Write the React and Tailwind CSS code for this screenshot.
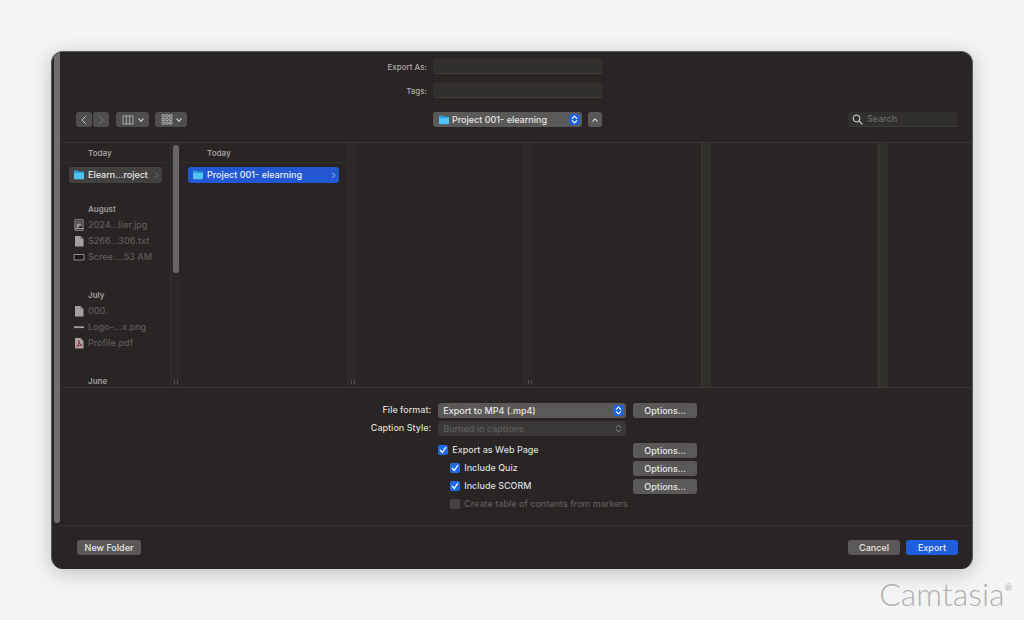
import React from "react";

const groups = [
  {
    title: "August",
    files: [
      { name: "2024…lier.jpg", icon: "image" },
      { name: "S266…306.txt", icon: "doc" },
      { name: "Scree….53 AM", icon: "screen" },
    ],
  },
  {
    title: "July",
    files: [
      { name: "000.", icon: "doc" },
      { name: "Logo-…x.png", icon: "line" },
      { name: "Profile.pdf", icon: "pdf" },
    ],
  },
];

function FolderIcon({ className = "" }) {
  return (
    <svg viewBox="0 0 12 10" aria-hidden="true" className={`h-[10px] w-3 shrink-0 ${className}`}>
      <path d="M1 1.6C1 .9 1.4.5 2.1.5h2c.4 0 .7.1 1 .4l.6.6h4.2c.7 0 1.1.4 1.1 1.1V4H1z" fill="#2b9fd6" />
      <path d="M1 2.9h10v5.3c0 .7-.4 1.1-1.1 1.1H2.1C1.4 9.300 1 8.900 1 8.200z" fill="#4fc3f7" />
    </svg>
  );
}

function FileIcon({ type }) {
  return (
    <svg viewBox="0 0 12 12" aria-hidden="true" className="h-3 w-3 shrink-0">
      {type === "image" && (
        <>
          <path d="M2 .8h8v10.400H2z" fill="none" stroke="#989694" />
          <path d="M3.500 2.600h5v1h-5zM3.500 4.600h5v3l-1.500-1-1.500 2-2 .8z" fill="#989694" />
          <path d="M2 9.500h8" stroke="#989694" />
        </>
      )}
      {type === "doc" && (
        <>
          <path d="M2 1h5.500L10.500 4v7.500H2z" fill="#a3a19f" />
          <path d="M7.500 1v3h3z" fill="#7b7977" />
        </>
      )}
      {type === "screen" && <path d="M1 3.500h10v5.500H1z" fill="#1d1b1a" stroke="#8f8d8b" />}
      {type === "line" && <path d="M1 6.200h10" stroke="#a5a3a1" strokeWidth="1.800" />}
      {type === "pdf" && (
        <>
          <path d="M2 1h5.500L10.500 4v7.500H2z" fill="#b09fa1" />
          <path
            d="M3.600 9.500C5 8.500 6 6.500 6 3.600c.2 2.900 1.300 4.400 3 4.700-2 0-3.800.3-5.400 1.200z"
            fill="none"
            stroke="#8f3040"
            strokeWidth="1"
          />
        </>
      )}
    </svg>
  );
}

function Chevron({ d, className = "" }) {
  return (
    <svg
      viewBox="0 0 10 10"
      aria-hidden="true"
      fill="none"
      stroke="currentColor"
      strokeLinecap="round"
      strokeLinejoin="round"
      className={`shrink-0 ${className}`}
    >
      <path d={d} />
    </svg>
  );
}

const RIGHT = "M3.500 1.500 7 5 3.500 8.500";
const LEFT = "M6.500 1.500 3 5l3.500 3.500";
const DOWN = "M2.200 3.700 5 6.500l2.800-2.800";
const UP = "M2.200 6.500 5 3.700l2.800 2.800";
const UP_DOWN = "M2.500 3.700 5 1.300l2.500 2.400M2.500 6.300 5 8.700l2.500-2.400";

function PopupSelect({ id, label, value, disabled, folder }) {
  return (
    <div className="relative min-w-0 flex-1">
      <select
        id={id}
        aria-label={label}
        disabled={disabled}
        defaultValue={value}
        className={`block h-[15px] w-full appearance-none rounded-[3px] pr-5 text-[9px] leading-[15px] font-medium ${
          folder ? "pl-[19px]" : "pl-[5px]"
        } ${disabled ? "bg-[#3b3938] text-[#5f5d5c] opacity-100" : "bg-[#5b5958] text-[#e6e5e4]"}`}
      >
        <option>{value}</option>
      </select>
      {folder && <FolderIcon className="pointer-events-none absolute top-[3px] left-[5px]" />}
      <span
        className={`pointer-events-none absolute top-[2px] right-[2px] flex h-[11px] w-[11px] items-center justify-center rounded-[3px] ${
          disabled ? "text-[#72706f]" : "bg-[#1f65d8] text-white"
        }`}
      >
        <Chevron d={UP_DOWN} className="h-[9px] w-[9px] stroke-[1.2]" />
      </span>
    </div>
  );
}

function Button({ primary, className = "", children }) {
  return (
    <button
      type="button"
      className={`h-[15px] rounded-[3px] text-[9px] leading-[15px] font-medium ${
        primary ? "bg-[#1f5fdd] text-[#e4ebfa]" : "bg-[#5b5958] text-[#e6e5e4]"
      } ${className}`}
    >
      {children}
    </button>
  );
}

function CheckRow({ id, label, checked, disabled, nested, wide }) {
  return (
    <div
      className={`flex h-[18px] items-center gap-1 whitespace-nowrap ${nested ? "pl-3" : ""} ${
        wide ? "col-span-3" : "col-span-1"
      } col-start-2`}
    >
      <span className="relative flex">
        <input
          id={id}
          type="checkbox"
          defaultChecked={checked}
          disabled={disabled}
          className="peer h-[10px] w-[10px] appearance-none rounded-[2px] bg-[#454342] checked:bg-[#1f6be6]"
        />
        <svg
          viewBox="0 0 10 10"
          aria-hidden="true"
          className="pointer-events-none absolute inset-0 hidden h-[10px] w-[10px] peer-checked:block"
        >
          <path d="M2.400 5.300 4.300 7.500 7.700 2.500" fill="none" stroke="#fff" strokeWidth="1.300" strokeLinecap="round" />
        </svg>
      </span>
      <label htmlFor={id} className={disabled ? "text-[#5f5d5c]" : "text-[#dddcdb]"}>
        {label}
      </label>
    </div>
  );
}

function TopFields() {
  return (
    <div className="grid grid-cols-[1fr_169px_1fr] gap-x-[6px] gap-y-2 pt-[7px] text-[8px] font-medium">
      <label htmlFor="export-as" className="text-right leading-4 text-[#aba9a8]">
        Export As:
      </label>
      <input id="export-as" className="h-[15px] rounded-[2px] border-b border-[#3f3e3a] bg-[#32302d] px-1 text-white" />
      <label htmlFor="tags" className="col-start-1 text-right leading-4 text-[#aba9a8]">
        Tags:
      </label>
      <input id="tags" className="h-[15px] rounded-[2px] border-b border-[#3f3e3a] bg-[#32302d] px-1 text-white" />
    </div>
  );
}

function Toolbar() {
  return (
    <div className="grid grid-cols-[1fr_169px_1fr] items-center gap-x-[6px] pt-[13px] pb-[15px]">
      <div className="flex pl-[13px] text-[#c4c2c1]">
        <div className="flex gap-px">
          <button type="button" aria-label="Back" className="flex h-[15px] w-4 items-center justify-center rounded-[3px] bg-[#504e4d]">
            <Chevron d={LEFT} className="h-[10px] w-[10px]" />
          </button>
          <button
            type="button"
            aria-label="Forward"
            className="flex h-[15px] w-4 items-center justify-center rounded-[3px] bg-[#504e4d] text-[#777574]"
          >
            <Chevron d={RIGHT} className="h-[10px] w-[10px]" />
          </button>
        </div>
        <button
          type="button"
          aria-label="Column view"
          className="ml-[7px] flex h-[15px] w-[33px] items-center justify-between rounded-[3px] bg-[#504e4d] pr-1 pl-[6px]"
        >
          <svg viewBox="0 0 12 10" aria-hidden="true" className="h-[10px] w-3">
            <path d="M1 1h10v8H1zM4.300 1v8M7.700 1v8" fill="none" stroke="currentColor" strokeWidth=".8" />
          </svg>
          <Chevron d={DOWN} className="h-2 w-2 stroke-[1.6]" />
        </button>
        <button
          type="button"
          aria-label="Group items"
          className="ml-[6px] flex h-[15px] w-8 items-center justify-between rounded-[3px] bg-[#504e4d] pr-1 pl-[6px]"
        >
          <svg viewBox="0 0 12 11" aria-hidden="true" className="h-[11px] w-3" fill="none" stroke="currentColor" strokeWidth=".8">
            {[0.8, 4.4, 8].map((y) => (
              <path key={y} d={`M1 ${y}h2.400v2.200H1zM4.800 ${y}h2.400v2.200H4.800zM8.600 ${y}H11v2.200H8.600z`} />
            ))}
          </svg>
          <Chevron d={DOWN} className="h-2 w-2 stroke-[1.6]" />
        </button>
      </div>

      <div className="flex gap-[6px]">
        <PopupSelect label="Location" value="Project 001- elearning" folder />
        <button
          type="button"
          aria-label="Collapse browser"
          className="flex h-[15px] w-[14px] items-center justify-center rounded-[3px] bg-[#5b5958] text-[#dddcdb]"
        >
          <Chevron d={UP} className="h-2 w-2 stroke-[1.3]" />
        </button>
      </div>

      <div className="flex justify-end pr-[14px]">
        <div className="flex h-[15px] w-[110px] items-center gap-1 rounded-[3px] border-b border-[#3f3e3a] bg-[#32302d] pl-1">
          <svg viewBox="0 0 11 11" aria-hidden="true" className="h-[11px] w-[11px] shrink-0">
            <circle cx="4.500" cy="4.500" r="3.300" fill="none" stroke="#bdbbba" strokeWidth="1.200" />
            <path d="m7 7 3 3" stroke="#bdbbba" strokeWidth="1.400" strokeLinecap="round" />
          </svg>
          <input
            type="search"
            aria-label="Search"
            placeholder="Search"
            className="w-full min-w-0 text-[9px] leading-[14px] font-medium text-white placeholder:text-[#6b6967]"
          />
        </div>
      </div>
    </div>
  );
}

function Divider({ strong, thumb, grip }) {
  return (
    <div
      className={`flex w-[10px] shrink-0 flex-col items-center justify-between border-l pt-[2px] pb-[3px] ${
        strong ? "border-[#3b3a37] bg-[#31302d]" : "border-[#302f2d] bg-[#2b2928]"
      }`}
    >
      <span className={thumb ? "h-32 w-[6px] rounded-full bg-[#686664]" : ""} />
      {grip && <span className="h-1 w-1 border-x border-[#52504f]" />}
    </div>
  );
}

function ColumnTitle({ children, className = "" }) {
  return (
    <h2 className={`border-b border-[#333130] pt-px text-[8px] leading-[18px] font-semibold text-[#a19f9e] ${className}`}>
      {children}
    </h2>
  );
}

function Browser() {
  return (
    <div className="flex h-[246px] overflow-hidden border-y border-[#393736]">
      <div className="flex w-[117px] shrink-0">
        <div className="min-w-0 flex-1">
          <ColumnTitle className="pl-[25px]">Today</ColumnTitle>
          <button
            type="button"
            className="mt-1 ml-[6px] flex h-4 w-[93px] items-center gap-[3px] rounded-[3px] bg-[#434140] pr-[2px] pl-1 text-[9px] font-medium whitespace-nowrap text-[#e6e5e4]"
          >
            <FolderIcon />
            <span className="flex-1 text-left">Elearn…roject</span>
            <Chevron d={RIGHT} className="h-[7px] w-[7px] text-[#8d8b8a]" />
          </button>
          <div className="flex flex-col gap-[22px] pt-[18px] pl-[10px]">
            {groups.map((group) => (
              <section key={group.title}>
                <h3 className="pl-[15px] text-[8px] leading-4 font-semibold text-[#a19f9e]">{group.title}</h3>
                <ul>
                  {group.files.map((file) => (
                    <li
                      key={file.name}
                      className="flex h-4 items-center gap-[3px] text-[9px] font-medium whitespace-nowrap text-[#5f5d5c]"
                    >
                      <FileIcon type={file.icon} />
                      {file.name}
                    </li>
                  ))}
                </ul>
              </section>
            ))}
            <h3 className="pl-[15px] text-[8px] leading-4 font-semibold text-[#a19f9e]">June</h3>
          </div>
        </div>
        <Divider thumb grip />
      </div>

      <div className="flex w-[177px] shrink-0">
        <div className="min-w-0 flex-1">
          <ColumnTitle className="pl-[27px]">Today</ColumnTitle>
          <button
            type="button"
            className="mt-1 ml-2 flex h-4 w-[151px] items-center gap-[3px] rounded-[3px] bg-[#2458d3] pr-[2px] pl-1 text-[9px] font-medium whitespace-nowrap text-[#e9eefb]"
          >
            <FolderIcon />
            <span className="flex-1 text-left">Project 001- elearning</span>
            <Chevron d={RIGHT} className="h-[7px] w-[7px]" />
          </button>
        </div>
        <Divider grip />
      </div>

      <div className="flex w-[177px] shrink-0 justify-end">
        <Divider grip />
      </div>
      <div className="flex w-[177px] shrink-0 justify-end">
        <Divider strong />
      </div>
      <div className="flex w-[177px] shrink-0 justify-end">
        <Divider strong />
      </div>
      <div className="flex-1" />
    </div>
  );
}

function ExportOptions() {
  return (
    <div className="grid grid-cols-[11fr_188px_64px_8fr] items-center gap-x-[7px] pt-[13px] pb-3 text-[9px] font-medium text-[#dddcdb]">
      <label htmlFor="file-format" className="text-right leading-[18px]">
        File format:
      </label>
      <PopupSelect id="file-format" value="Export to MP4 (.mp4)" />
      <Button>Options...</Button>

      <label htmlFor="caption-style" className="col-start-1 text-right leading-[18px]">
        Caption Style:
      </label>
      <PopupSelect id="caption-style" value="Burned in captions" disabled />

      <div className="col-span-4 h-1" />

      <CheckRow id="web-page" label="Export as Web Page" checked />
      <Button>Options...</Button>
      <CheckRow id="quiz" label="Include Quiz" checked nested />
      <Button>Options...</Button>
      <CheckRow id="scorm" label="Include SCORM" checked nested />
      <Button>Options...</Button>
      <CheckRow id="toc" label="Create table of contents from markers" disabled nested wide />
    </div>
  );
}

function App() {
  return (
    <div className="flex min-h-screen flex-col bg-[#f4f4f4] pt-[51px] font-['Inter',sans-serif]">
      <main className="mx-[51px] overflow-hidden rounded-[12px] border border-[#5c5a59] border-b-[#282524] bg-[#282524] shadow-[0_4px_20px_rgba(0,0,0,0.22)]">
        <div className="flex">
          <div className="flex w-[11px] shrink-0 pb-[2px] pl-[2px]">
            <div className="w-[6px] rounded-b-full bg-[#716f6d]" />
          </div>
          <div className="min-w-0 flex-1">
            <TopFields />
            <Toolbar />
            <Browser />
            <ExportOptions />
          </div>
        </div>
        <footer className="ml-2 flex gap-[6px] border-t border-[#353332] pt-[14px] pr-[14px] pb-[13px] pl-[17px]">
          <Button className="mr-auto w-16">New Folder</Button>
          <Button className="w-[52px]">Cancel</Button>
          <Button primary className="w-[52px]">
            Export
          </Button>
        </footer>
      </main>

      <div className="mt-[5px] flex items-start justify-end pr-3 font-['Lato',sans-serif] text-[#b0b0b0]">
        <span className="text-[32px] leading-10 font-light">Camtasia</span>
        <span className="mt-2 text-[9px] leading-3">®</span>
      </div>
    </div>
  );
}

export default App;
